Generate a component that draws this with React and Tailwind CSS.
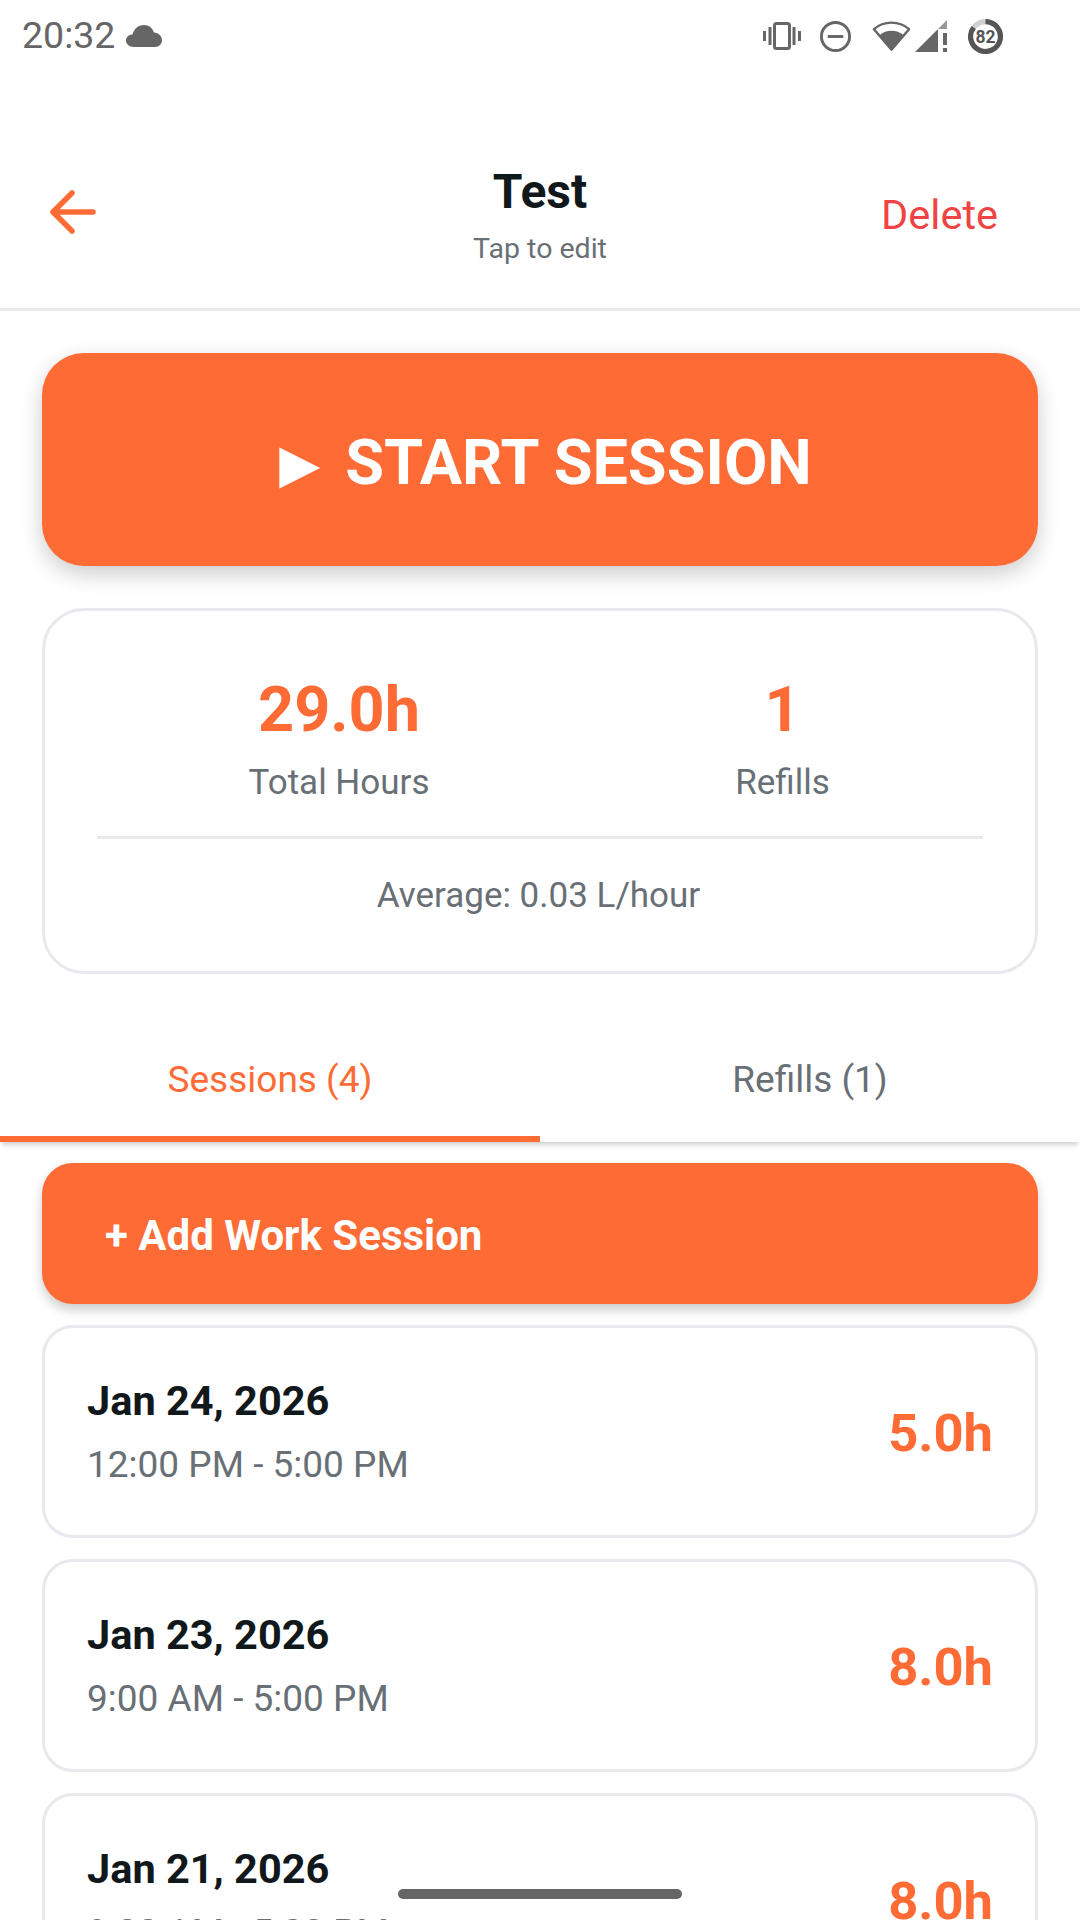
import React from 'react';

const sessions = [
  { date: 'Jan 24, 2026', time: '12:00 PM - 5:00 PM', hours: '5.0h' },
  { date: 'Jan 23, 2026', time: '9:00 AM - 5:00 PM', hours: '8.0h' },
  { date: 'Jan 21, 2026', time: '9:00 AM - 5:00 PM', hours: '8.0h' },
];

const StatusIcons = () => (
  <div className="flex items-center">
    <svg width="38" height="28" viewBox="0 0 38 28" fill="none" className="mr-[18px]">
      <rect x="11.5" y="1.5" width="15" height="25" rx="2" stroke="#666" strokeWidth="3" />
      <rect x="0" y="9" width="3" height="10" fill="#666" />
      <rect x="5.5" y="5" width="3" height="18" fill="#666" />
      <rect x="29.5" y="5" width="3" height="18" fill="#666" />
      <rect x="35" y="9" width="3" height="10" fill="#666" />
    </svg>
    <svg width="33" height="33" viewBox="0 0 34 34" fill="none" className="mr-[20px]">
      <circle cx="17" cy="17" r="14.5" stroke="#666" strokeWidth="3" />
      <rect x="9" y="15.5" width="16" height="3" fill="#666" />
    </svg>
    <svg width="39" height="32" viewBox="0 0 40 32" fill="none" className="mr-[4px]">
      <path d="M20 30 L2 9 C12 0 28 0 38 9 Z" stroke="#666" strokeWidth="2.5" strokeLinejoin="round" />
      <path d="M20 31 L8 15 C14 9 26 9 32 15 Z" fill="#666" />
    </svg>
    <svg width="32" height="32" viewBox="0 0 32 32" className="mr-[21px]">
      <path d="M0 32 L23 9 V32 Z" fill="#666" />
      <path d="M32 0 V9 H23 Z" fill="#999" />
      <rect x="28" y="13" width="4" height="12" fill="#666" />
      <rect x="28" y="28" width="4" height="4" fill="#666" />
    </svg>
    <svg width="35" height="35" viewBox="0 0 34 34" fill="none" className="mr-[77px]">
      <circle cx="17" cy="17" r="14.5" stroke="#d0d0d0" strokeWidth="5" />
      <path d="M17 2.5 A14.5 14.5 0 1 1 5.5 8.2" stroke="#555" strokeWidth="5" />
      <text x="17" y="23" textAnchor="middle" fontSize="17" fontWeight="700" fill="#555" fontFamily="Roboto, sans-serif">82</text>
    </svg>
  </div>
);

const App = () => {
  return (
    <div className="relative h-[1920px] w-[1080px] overflow-hidden bg-white font-['Roboto',sans-serif]">
      <div className="flex h-[70px] items-center justify-between pl-[22px] pt-[2px]">
        <div className="flex items-center gap-[11px]">
          <span className="text-[37.5px] leading-none text-[#666]">20:32</span>
          <svg width="36" height="22" viewBox="0 0 36 22">
            <path d="M8 22 C3 22 0 19 0 15.5 C0 12 3 9.5 6.5 9.5 C8 4 12 0 18 0 C23 0 26.5 3 28 7.5 C32.5 8 36 11 36 15 C36 19 33 22 29 22 Z" fill="#666" />
          </svg>
        </div>
        <StatusIcons />
      </div>

      <header className="flex h-[241px] items-start border-b-[3px] border-[#e8e8ee] px-[42px] pt-[92px]">
        <div className="flex-1">
          <svg width="46" height="46" viewBox="0 0 46 46" fill="none" className="mt-[27px] ml-[8px]">
            <path d="M43 20 H3 M22 1 L3 20 L22 39" stroke="#ff6b35" strokeWidth="5.5" strokeLinecap="round" strokeLinejoin="round" transform="translate(0 3)" />
          </svg>
        </div>
        <div className="flex flex-col items-center">
          <span className="text-[48px] font-bold leading-[60px] text-[#11181c]">Test</span>
          <span className="mt-[8px] text-[28.5px] leading-[38px] text-[#687076]">Tap to edit</span>
        </div>
        <div className="flex flex-1 justify-end">
          <span className="mr-[40px] mt-[26px] text-[41.5px] leading-[54px] text-[#ef4444]">Delete</span>
        </div>
      </header>

      <div className="px-[42px] pt-[42px]">
        <button className="flex h-[213px] w-full items-center justify-center rounded-[42px] bg-[#ff6b35] pl-[12px] pt-[8px] text-[63px] font-bold text-white shadow-[0_8px_22px_rgba(0,0,0,0.2)]">
          <span className="mr-[27px] text-[50px] leading-none">▶</span>
          <span>START SESSION</span>
        </button>

        <div className="mt-[42px] h-[366px] rounded-[42px] border-[3px] border-[#e8e8ee] bg-white px-[52px] pt-[57px]">
          <div className="flex pl-[21px]">
            <div className="flex w-[442px] shrink-0 flex-col items-center">
              <span className="text-[63px] font-bold leading-[84px] text-[#ff6b35]">29.0h</span>
              <span className="mt-[7px] text-[35px] leading-[48px] text-[#687076]">Total Hours</span>
            </div>
            <div className="flex w-[445px] shrink-0 flex-col items-center">
              <span className="text-[63px] font-bold leading-[84px] text-[#ff6b35]">1</span>
              <span className="mt-[7px] text-[35px] leading-[48px] text-[#687076]">Refills</span>
            </div>
          </div>
          <div className="mt-[29px] border-t-[3px] border-[#e8e8ee] pr-[3px] pt-[33px] text-center text-[35px] leading-[48px] text-[#687076]">
            Average: 0.03 L/hour
          </div>
        </div>
      </div>

      <div className="mt-[42px] flex h-[126px] bg-white shadow-[0_5px_5px_-2px_rgba(0,0,0,0.18)]">
        <div className="flex flex-1 items-center justify-center border-b-[6px] border-[#ff6b35] pt-[8px] text-[37px] text-[#ff6b35]">Sessions (4)</div>
        <div className="flex flex-1 items-center justify-center pt-[2px] text-[37px] text-[#687076]">Refills (1)</div>
      </div>

      <div className="flex flex-col gap-[21px] px-[42px] pt-[21px]">
        <button className="flex h-[141px] w-full items-center rounded-[31px] bg-[#ff6b35] pl-[63px] pt-[4px] text-[42px] font-bold text-white shadow-[0_6px_12px_rgba(0,0,0,0.2)]">
          + Add Work Session
        </button>
        {sessions.map((s) => (
          <div key={s.date} className="flex h-[213px] shrink-0 items-center justify-between rounded-[31px] border-[3px] border-[#e8e8ee] bg-white px-[42px]">
            <div className="flex flex-col">
              <span className="text-[41.5px] font-bold leading-[52px] text-[#11181c]">{s.date}</span>
              <span className="mt-[14px] text-[37px] leading-[48px] text-[#687076]">{s.time}</span>
            </div>
            <span className="pt-[3px] text-[52.5px] font-bold text-[#ff6b35]">{s.hours}</span>
          </div>
        ))}
      </div>

      <div className="absolute bottom-[21px] left-[398px] h-[10px] w-[284px] rounded-full bg-[#666]" />
    </div>
  );
};

export default App;
